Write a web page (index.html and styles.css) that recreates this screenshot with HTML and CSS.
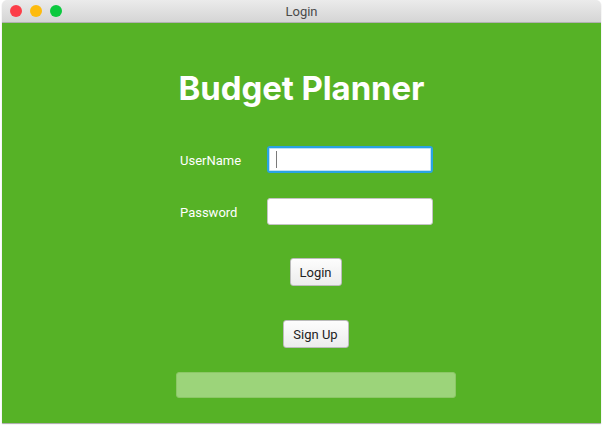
FILE: index.html
```html
<!DOCTYPE html>
<html>
<head>
<meta charset="utf-8">
<link rel="stylesheet" href="styles.css">
</head>
<body>
<div class="window">
  <div class="titlebar">
    <div class="lights">
      <span class="light red"></span>
      <span class="light yellow"></span>
      <span class="light green"></span>
    </div>
    <div class="title">Login</div>
  </div>
  <div class="content">
    <h1 class="heading">Budget Planner</h1>
    <div class="form">
      <div class="row">
        <label class="label">UserName</label>
        <div class="input focused"><span class="caret"></span></div>
      </div>
      <div class="row">
        <label class="label">Password</label>
        <div class="input"></div>
      </div>
    </div>
    <button class="btn login">Login</button>
    <button class="btn signup">Sign Up</button>
    <div class="status"></div>
  </div>
</div>
</body>
</html>
```
FILE: styles.css
```css
html, body {
  margin: 0;
  padding: 0;
  background: #ffffff;
}
body {
  width: 603px;
  height: 425px;
  overflow: hidden;
  font-family: "Roboto", "Liberation Sans", sans-serif;
}
.window {
  margin-left: 2px;
  width: 599px;
  height: 423px;
  display: flex;
  flex-direction: column;
  border-radius: 5px 5px 0 0;
  overflow: hidden;
  box-shadow: 0 1px 1px rgba(0,0,0,0.35);
}
.titlebar {
  height: 22px;
  flex: none;
  background: linear-gradient(#ebebeb, #d5d5d5);
  border-bottom: 1px solid #b1b1b1;
  position: relative;
  display: flex;
  align-items: center;
  justify-content: center;
}
.lights {
  position: absolute;
  left: 8px;
  top: 5px;
  display: flex;
  gap: 8px;
}
.light {
  width: 12px;
  height: 12px;
  border-radius: 50%;
  display: block;
}
.red { background: #fc3d48; }
.yellow { background: #fdbb0d; }
.green { background: #0bc93e; }
.title {
  font-size: 13px;
  color: #4a4a4a;
}
.content {
  flex: 1;
  background: #56b226;
  display: flex;
  flex-direction: column;
  align-items: center;
  padding-top: 45px;
  box-sizing: border-box;
}
.heading {
  margin: 0;
  color: #ffffff;
  font-size: 33px;
  font-weight: 700;
  line-height: 40px;
  font-family: "Inter", "Roboto", sans-serif;
  letter-spacing: -0.1px;
}
.form {
  margin-top: 38px;
  display: flex;
  flex-direction: column;
  gap: 25px;
  margin-left: 10px;
}
.row {
  display: flex;
  align-items: center;
}
.label {
  width: 87px;
  color: #ffffff;
  font-size: 13px;
  padding-top: 1px;
}
.input {
  width: 166px;
  height: 27px;
  background: #ffffff;
  border: 1px solid #c4c4c4;
  border-radius: 3px;
  box-sizing: border-box;
  position: relative;
}
.input.focused {
  border: 2px solid #2aa3e3;
  box-shadow: inset 0 0 0 1px #bfe1f4;
}
.caret {
  position: absolute;
  left: 7px;
  top: 3px;
  width: 1px;
  height: 17px;
  background: #7a7a7a;
}
.btn {
  font-family: "Roboto", "Liberation Sans", sans-serif;
  font-size: 13px;
  color: #222;
  background: linear-gradient(#fdfdfd, #ececec);
  border: 1px solid #bcbcbc;
  border-radius: 3px;
  height: 28px;
  padding: 0 8px;
  box-sizing: border-box;
  margin-left: 28px;
}
.login {
  margin-top: 33px;
  width: 52px;
}
.signup {
  margin-top: 34px;
  width: 66px;
}
.status {
  margin-top: 24px;
  width: 280px;
  height: 26px;
  background: #9cd47a;
  border: 1px solid #8cc766;
  border-radius: 3px;
  box-sizing: border-box;
  margin-left: 28px;
}
```
